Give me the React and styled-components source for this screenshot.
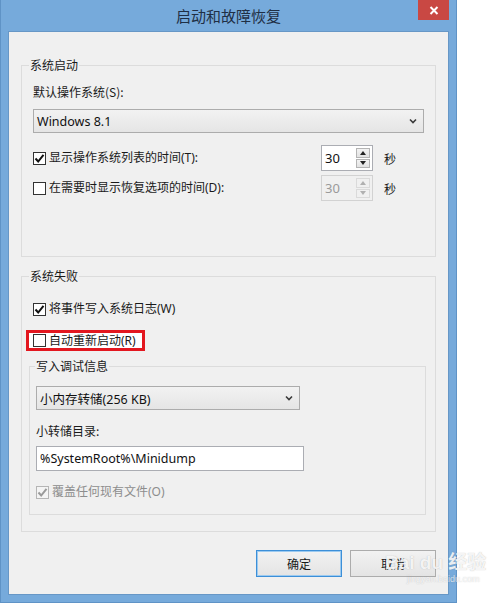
import React from "react";
import styled, { createGlobalStyle } from "styled-components";

const GlobalStyle = createGlobalStyle`
  html, body {
    margin: 0;
    padding: 0;
    background: #ffffff;
  }
  body {
    font-family: "Noto Sans", "Noto Sans CJK SC", sans-serif;
    font-size: 12px;
    color: #1a1a1a;
  }
`;

const Window = styled.div`
  position: relative;
  width: 457px;
  height: 603px;
  box-sizing: border-box;
  background: #76aadb;
  border: 1px solid #5f93c6;
  border-top: none;
  display: flex;
  flex-direction: column;
  padding: 0 7px 7px 7px;
`;

const TitleBar = styled.div`
  position: relative;
  height: 30px;
  display: flex;
  align-items: center;
  justify-content: center;
  font-family: "Noto Sans CJK SC", sans-serif;
  font-size: 15px;
  color: #1f2f45;
  padding-bottom: 1px;
`;

const CloseButton = styled.div`
  position: absolute;
  top: 0;
  right: 0;
  width: 31px;
  height: 20px;
  background: #c94843;
  display: flex;
  align-items: center;
  justify-content: center;
`;

const Client = styled.div`
  flex: 1;
  background: #f0f0f0;
  border: 1px solid #6797c6;
  display: flex;
  flex-direction: column;
  padding: 25px 12px 0 12px;
`;

const Group = styled.fieldset`
  margin: ${(p) => p.$margin || "0"};
  padding: ${(p) => p.$padding};
  border: 1px solid #dcdcdc;
  min-width: 0;
`;

const Legend = styled.legend`
  font-family: "Noto Sans CJK SC", sans-serif;
  font-size: 12px;
  line-height: 16px;
  padding: 0 1px;
  margin-left: ${(p) => p.$offset || "-4px"};
  color: #1a1a1a;
`;

const Label = styled.div`
  font-family: "Noto Sans CJK SC", sans-serif;
  line-height: 16px;
  margin-top: ${(p) => p.$top || "0"};
`;

const Combo = styled.div`
  box-sizing: border-box;
  height: 24px;
  width: ${(p) => p.$width || "auto"};
  margin-top: ${(p) => p.$top || "0"};
  margin-right: ${(p) => p.$right || "0"};
  border: 1px solid #acacac;
  background: linear-gradient(#f2f2f2, #e5e5e5);
  display: flex;
  align-items: center;
  justify-content: space-between;
  padding: 0 6px 0 3px;
  font-family: "Noto Sans", "Noto Sans CJK SC", sans-serif;
  font-size: 12.5px;
  color: #111;
`;

const TextInput = styled.div`
  box-sizing: border-box;
  height: 25px;
  width: 268px;
  margin-top: 7px;
  border: 1px solid #abadb3;
  background: #ffffff;
  display: flex;
  align-items: center;
  padding-left: 3px;
  font-family: "Noto Sans", sans-serif;
  font-size: 12.5px;
  color: #111;
`;

const Row = styled.div`
  display: flex;
  align-items: center;
  margin-top: ${(p) => p.$top || "0"};
`;

const CheckRow = styled.div`
  display: flex;
  align-items: center;
  gap: 3px;
  line-height: 16px;
  margin-top: ${(p) => p.$top || "0"};
  padding-left: ${(p) => p.$indent || "0"};
  color: ${(p) => (p.$disabled ? "#8d8d8d" : "#1a1a1a")};
  font-family: "Noto Sans", "Noto Sans CJK SC", sans-serif;
`;

const Box = styled.span`
  box-sizing: border-box;
  width: 13px;
  height: 13px;
  border: 1px solid ${(p) => (p.$disabled ? "#b5b5b5" : "#333333")};
  background: ${(p) => (p.$disabled ? "#f4f4f4" : "#ffffff")};
  display: flex;
  align-items: center;
  justify-content: center;
`;

const Highlight = styled.div`
  width: fit-content;
  margin: 13px 0 0 -5px;
  border: 3px solid #e3171f;
  padding: 0 6px 0 4px;
  height: 15px;
  display: flex;
  align-items: center;
  background: #ffffff;
`;

const Spin = styled.div`
  box-sizing: border-box;
  width: 52px;
  height: 26px;
  border: 1px solid ${(p) => (p.$disabled ? "#d2d2d2" : "#abadb3")};
  background: ${(p) => (p.$disabled ? "#f0f0f0" : "#ffffff")};
  display: flex;
  padding: 2px;
  font-family: "Noto Sans", sans-serif;
  font-size: 13px;
  color: ${(p) => (p.$disabled ? "#9a9a9a" : "#111")};
`;

const SpinValue = styled.div`
  flex: 1;
  display: flex;
  align-items: center;
  padding-left: 1px;
`;

const SpinButtons = styled.div`
  width: 14px;
  display: flex;
  flex-direction: column;
  gap: 1px;
`;

const SpinBtn = styled.div`
  flex: 1;
  box-sizing: border-box;
  border: 1px solid ${(p) => (p.$disabled ? "#dadada" : "#b4b4b4")};
  background: ${(p) => (p.$disabled ? "#f0f0f0" : "linear-gradient(#f3f3f3, #e2e2e2)")};
  display: flex;
  align-items: center;
  justify-content: center;
`;

const Unit = styled.span`
  margin-left: 11px;
  font-family: "Noto Sans CJK SC", sans-serif;
  margin-right: 39px;
`;

const Grow = styled.div`
  flex: 1;
  display: flex;
`;

const Buttons = styled.div`
  display: flex;
  justify-content: flex-end;
  gap: 8px;
  margin-top: 18px;
`;

const Button = styled.div`
  box-sizing: border-box;
  width: 86px;
  height: 27px;
  border: 1px solid ${(p) => (p.$primary ? "#3c8fd8" : "#acacac")};
  box-shadow: ${(p) => (p.$primary ? "inset 0 0 0 1px #9ccaf0" : "none")};
  background: linear-gradient(#f2f2f2, #e4e4e4);
  display: flex;
  align-items: center;
  justify-content: center;
  font-family: "Noto Sans CJK SC", sans-serif;
  color: #1a1a1a;
`;

const Watermark = styled.div`
  position: absolute;
  left: 384px;
  top: 552px;
  display: flex;
  flex-direction: column;
  align-items: flex-start;
  white-space: nowrap;
  font-family: "Liberation Sans", "Noto Sans CJK SC", sans-serif;
  color: rgba(255, 255, 255, 0.85);
  text-shadow: 0 0 1px rgba(120, 120, 120, 0.5);
  pointer-events: none;
`;

const WmMain = styled.div`
  font-size: 19px;
  font-weight: bold;
  line-height: 22px;
`;

const WmSub = styled.div`
  font-size: 9px;
  line-height: 11px;
  margin-left: 22px;
  opacity: 0.8;
`;

const Chevron = () => (
  <svg width="8" height="6" viewBox="0 0 8 6">
    <path d="M1 1.5 L4 4.5 L7 1.5" fill="none" stroke="#3a3a3a" strokeWidth="1.6" />
  </svg>
);

const Tick = ({ color }) => (
  <svg width="11" height="11" viewBox="0 0 11 11">
    <path d="M1.5 5.5 L4.2 8.5 L9.5 1.8" fill="none" stroke={color} strokeWidth="2" />
  </svg>
);

const Check = ({ checked, disabled, children, top, indent }) => (
  <CheckRow $top={top} $indent={indent} $disabled={disabled}>
    <Box $disabled={disabled}>{checked && <Tick color={disabled ? "#9a9a9a" : "#111"} />}</Box>
    <span>{children}</span>
  </CheckRow>
);

const Arrow = ({ up, disabled }) => (
  <svg width="6" height="4" viewBox="0 0 6 4">
    <path d={up ? "M0 4 L3 0 L6 4 Z" : "M0 0 L6 0 L3 4 Z"} fill={disabled ? "#b0b0b0" : "#222"} />
  </svg>
);

const SpinBox = ({ disabled }) => (
  <Spin $disabled={disabled}>
    <SpinValue>30</SpinValue>
    <SpinButtons>
      <SpinBtn $disabled={disabled}><Arrow up disabled={disabled} /></SpinBtn>
      <SpinBtn $disabled={disabled}><Arrow disabled={disabled} /></SpinBtn>
    </SpinButtons>
  </Spin>
);

export default function App() {
  return (
    <>
      <GlobalStyle />
      <Window>
        <TitleBar>
          启动和故障恢复
          <CloseButton>
            <svg width="10" height="9" viewBox="0 0 10 9">
              <path d="M1.5 1 L8.5 8 M8.5 1 L1.5 8" stroke="#fff" strokeWidth="2" />
            </svg>
          </CloseButton>
        </TitleBar>
        <Client>
          <Group $padding="11px 0 55px 11px">
            <Legend>系统启动</Legend>
            <Label>默认操作系统(S):</Label>
            <Combo $top="9px" $right="11px">
              Windows 8.1
              <Chevron />
            </Combo>
            <Row $top="12px">
              <Grow>
                <Check checked>显示操作系统列表的时间(T):</Check>
              </Grow>
              <SpinBox />
              <Unit>秒</Unit>
            </Row>
            <Row $top="4px">
              <Grow>
                <Check>在需要时显示恢复选项的时间(D):</Check>
              </Grow>
              <SpinBox disabled />
              <Unit>秒</Unit>
            </Row>
          </Group>
          <Group $padding="17px 9px 16px 9px" $margin="11px 0 0 0">
            <Legend $offset="-2px">系统失败</Legend>
            <Check checked indent="2px">将事件写入系统日志(W)</Check>
            <Highlight>
              <Check>自动重新启动(R)</Check>
            </Highlight>
            <Group $padding="12px 0 14px 6px" $margin="7px 0 0 -2px">
              <Legend $offset="-1px">写入调试信息</Legend>
              <Combo $width="264px">
                小内存转储(256 KB)
                <Chevron />
              </Combo>
              <Label $top="13px">小转储目录:</Label>
              <TextInput>%SystemRoot%\Minidump</TextInput>
              <Check checked disabled top="13px">覆盖任何现有文件(O)</Check>
            </Group>
          </Group>
          <Buttons>
            <Button $primary>确定</Button>
            <Button>取消</Button>
          </Buttons>
        </Client>
        <Watermark>
          <WmMain>Bai du 经验</WmMain>
          <WmSub>jingyan.baidu.com</WmSub>
        </Watermark>
      </Window>
    </>
  );
}
